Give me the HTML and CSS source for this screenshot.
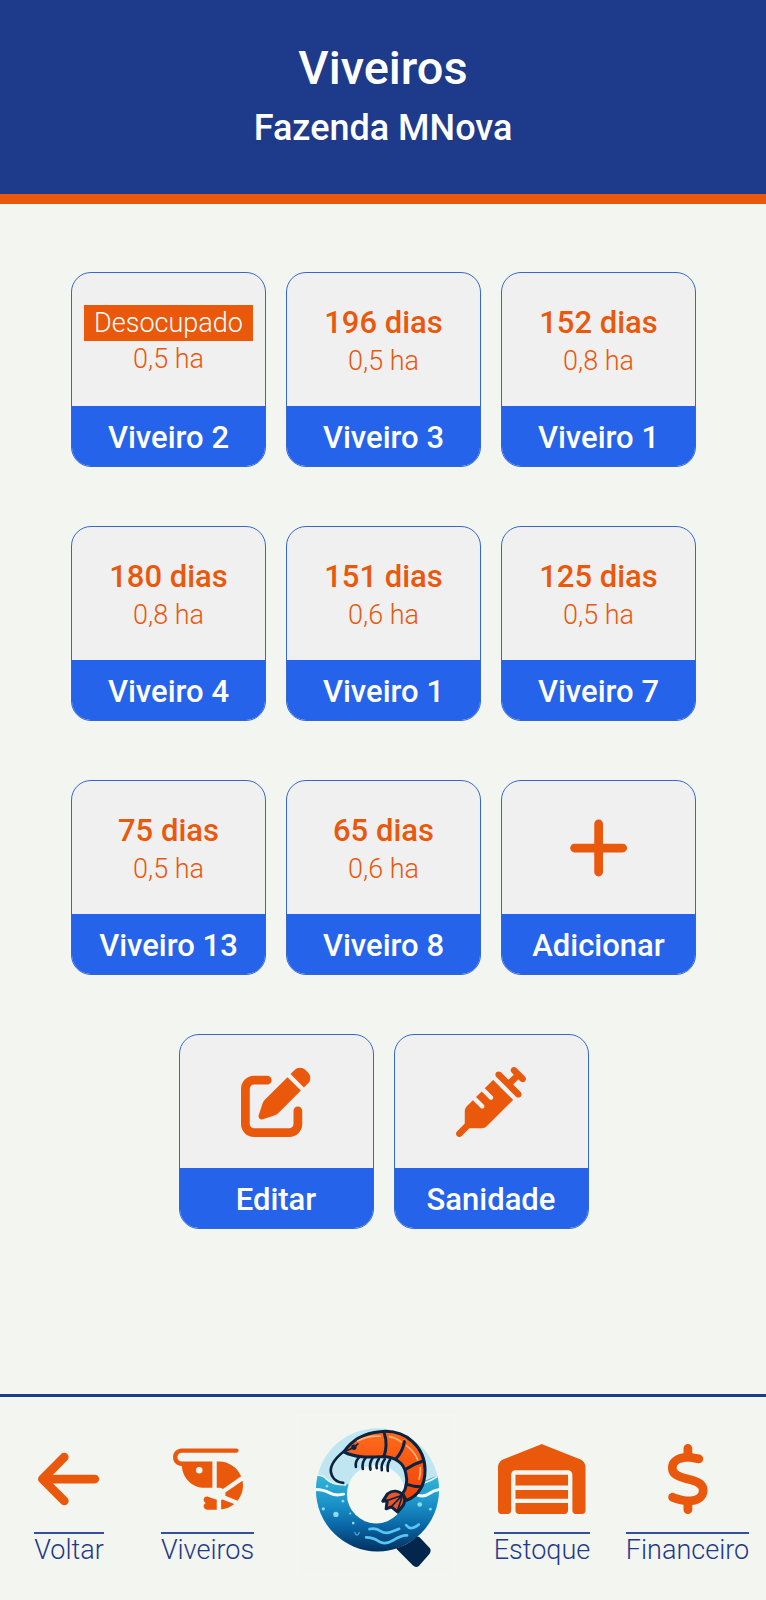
FILE: index.html
```html
<!DOCTYPE html>
<html lang="pt-BR">
<head>
<meta charset="utf-8">
<meta name="viewport" content="width=device-width, initial-scale=1">
<title>Viveiros</title>
<link rel="stylesheet" href="styles.css">
</head>
<body>
<header class="header">
  <h1 class="header-title">Viveiros</h1>
  <h2 class="header-farm">Fazenda MNova</h2>
</header>

<main class="ponds">
  <a class="card" href="#"><span class="card-body"><span class="badge">Desocupado</span><span class="area">0,5 ha</span></span><span class="card-label">Viveiro 2</span></a>
  <a class="card" href="#"><span class="card-body"><span class="days">196 dias</span><span class="area">0,5 ha</span></span><span class="card-label">Viveiro 3</span></a>
  <a class="card" href="#"><span class="card-body"><span class="days">152 dias</span><span class="area">0,8 ha</span></span><span class="card-label">Viveiro 1</span></a>
  <a class="card" href="#"><span class="card-body"><span class="days">180 dias</span><span class="area">0,8 ha</span></span><span class="card-label">Viveiro 4</span></a>
  <a class="card" href="#"><span class="card-body"><span class="days">151 dias</span><span class="area">0,6 ha</span></span><span class="card-label">Viveiro 1</span></a>
  <a class="card" href="#"><span class="card-body"><span class="days">125 dias</span><span class="area">0,5 ha</span></span><span class="card-label">Viveiro 7</span></a>
  <a class="card" href="#"><span class="card-body"><span class="days">75 dias</span><span class="area">0,5 ha</span></span><span class="card-label">Viveiro 13</span></a>
  <a class="card" href="#"><span class="card-body"><span class="days">65 dias</span><span class="area">0,6 ha</span></span><span class="card-label">Viveiro 8</span></a>
  <button class="card" type="button"><span class="card-body"><svg class="icon" viewBox="0 0 448 512" aria-hidden="true"><path d="M256 80c0-17.7-14.3-32-32-32s-32 14.3-32 32V224H48c-17.7 0-32 14.3-32 32s14.3 32 32 32H192V432c0 17.7 14.3 32 32 32s32-14.3 32-32V288H400c17.7 0 32-14.3 32-32s-14.3-32-32-32H256V80z"/></svg></span><span class="card-label">Adicionar</span></button>
  <button class="card" type="button"><span class="card-body"><svg class="icon" viewBox="0 0 512 512" aria-hidden="true"><path d="M471.6 21.7c-21.9-21.9-57.3-21.9-79.2 0L362.3 51.7l97.9 97.9 30.1-30.1c21.9-21.9 21.9-57.3 0-79.2L471.6 21.7zm-299.2 220c-6.1 6.1-10.8 13.6-13.5 21.9l-29.6 88.8c-2.9 8.6-.6 18.1 5.8 24.6s15.9 8.7 24.6 5.8l88.8-29.6c8.2-2.7 15.7-7.4 21.9-13.5L437.7 172.3 339.7 74.3 172.4 241.7zM96 64C43 64 0 107 0 160V416c0 53 43 96 96 96H352c53 0 96-43 96-96V320c0-17.7-14.3-32-32-32s-32 14.3-32 32v96c0 17.7-14.3 32-32 32H96c-17.7 0-32-14.3-32-32V160c0-17.7 14.3-32 32-32h96c17.7 0 32-14.3 32-32s-14.3-32-32-32H96z"/></svg></span><span class="card-label">Editar</span></button>
  <button class="card" type="button"><span class="card-body"><svg class="icon" viewBox="0 0 512 512" aria-hidden="true"><path d="M441 7l32 32 32 32c9.4 9.4 9.4 24.6 0 33.9s-24.6 9.4-33.9 0l-15-15L417.9 128l55 55c9.4 9.4 9.4 24.6 0 33.9s-24.6 9.4-33.9 0l-72-72L295 73c-9.4-9.4-9.4-24.6 0-33.9s24.6-9.4 33.9 0l55 55L422.1 56 407 41c-9.4-9.4-9.4-24.6 0-33.9s24.6-9.4 33.9 0zM210.3 155.7l61.1-61.1c.3 .3 .6 .7 1 1l16 16 56 56 56 56 16 16c.3 .3 .6 .6 1 1l-191 191c-10.5 10.5-24.7 16.4-39.6 16.4H97.9L41 505c-9.4 9.4-24.6 9.4-33.9 0s-9.4-24.6 0-33.9l57-57V325.3c0-14.9 5.9-29.1 16.4-39.6l43.3-43.3 57 57c6.2 6.2 16.4 6.2 22.6 0s6.2-16.4 0-22.6l-57-57 41.4-41.4 57 57c6.2 6.2 16.4 6.2 22.6 0s6.2-16.4 0-22.6l-57-57z"/></svg></span><span class="card-label">Sanidade</span></button>
</main>

<nav class="tabs" aria-label="Principal">
  <a class="tab" href="#"><svg class="icon" viewBox="0 0 448 512" aria-hidden="true"><path d="M9.4 233.4c-12.5 12.5-12.5 32.8 0 45.3l160 160c12.5 12.5 32.8 12.5 45.3 0s12.5-32.8 0-45.3L109.2 288 416 288c17.7 0 32-14.3 32-32s-14.3-32-32-32l-306.7 0L214.6 118.6c12.5-12.5 12.5-32.8 0-45.3s-32.8-12.5-45.3 0l-160 160z"/></svg><span class="tab-label">Voltar</span></a>
  <a class="tab" href="#"><svg class="icon" viewBox="0 0 512 512" aria-hidden="true"><path d="M64 32C28.7 32 0 60.7 0 96s28.7 64 64 64h1c3.7 88.9 77 160 167 160h56V128H264 88.8 64c-17.7 0-32-14.3-32-32s14.3-32 32-32H464c8.8 0 16-7.2 16-16s-7.2-16-16-16H64zM224 456c0 13.3 10.7 24 24 24h72V407.8l-64.1-22.4c-12.5-4.4-26.2 2.2-30.6 14.7s2.2 26.2 14.7 30.6l4.5 1.6C233 433.9 224 443.9 224 456zm128 23.3c36.4-3.3 69.5-17.6 96.1-39.6l-86.5-34.6c-3 1.8-6.2 3.2-9.6 4.3v69.9zM472.6 415c24.6-30.3 39.4-68.9 39.4-111c0-12.3-1.3-24.3-3.7-35.9L382.8 355.1c.8 3.4 1.2 7 1.2 10.6c0 4.6-.7 9-1.9 13.1L472.6 415zM336 128H320V320h18.3c9.9 0 19.1 3.2 26.6 8.5l133.5-92.4C471.8 172.6 409.1 128 336 128zM168 192a24 24 0 1 1 48 0 24 24 0 1 1 -48 0z"/></svg><span class="tab-label">Viveiros</span></a>
  <a class="tab-home" href="#" aria-label="Início">
    <svg class="logo" viewBox="20 15 475 475" aria-hidden="true">
      <defs>
        <linearGradient id="sea" x1="0" y1="195" x2="0" y2="422" gradientUnits="userSpaceOnUse">
          <stop offset="0" stop-color="#35b4d8"/><stop offset=".35" stop-color="#1c94c9"/><stop offset=".65" stop-color="#0b68a8"/><stop offset="1" stop-color="#02315f"/>
        </linearGradient>
        <linearGradient id="shell" x1="0" y1="65" x2="0" y2="260" gradientUnits="userSpaceOnUse">
          <stop offset="0" stop-color="#ff6a1c"/><stop offset="1" stop-color="#f04208"/>
        </linearGradient>
        <clipPath id="disc"><circle cx="262" cy="237" r="185"/></clipPath>
      </defs>
      <g clip-path="url(#disc)">
        <path d="M70 40H460V430H70z" fill="#bfe6f1"/>
        <path d="M70 196Q95 190 112 208T170 220L345 224Q385 222 405 210T450 192V430H70z" fill="url(#sea)"/>
        <path d="M76 236Q100 236 118 246T160 250M385 254Q405 258 418 248T448 236" fill="none" stroke="#f3fbfc" stroke-width="9" stroke-linecap="round"/>
        <path d="M76 194Q96 190 110 206T168 222M392 220Q424 210 448 194" fill="none" stroke="#e2f6fa" stroke-width="5"/>
      </g>
      <circle cx="258" cy="250" r="88" fill="#f5f7f2"/>
      <path d="M318 413Q352 403 380 378Q386 376 392 383L419 412Q425 420 418 430L387 465Q378 473 368 464Z" fill="#03264c"/>
      <path d="M238 355Q254 350 270 360T302 364T327 354M228 380Q248 380 266 392T310 388T351 374M348 343Q358 355 369 351T386 341" fill="none" stroke="#58c5f2" stroke-width="8" stroke-linecap="round"/>
      <g fill="#8bdcf2"><circle cx="137" cy="311" r="8"/><circle cx="99" cy="294" r="5"/><circle cx="158" cy="271" r="4"/><circle cx="180" cy="308" r="3"/><circle cx="189" cy="337" r="4"/><circle cx="110" cy="226" r="4"/><circle cx="389" cy="281" r="7"/><circle cx="421" cy="295" r="4"/></g>
      <path d="M193 364Q200 382 208 364" fill="none" stroke="#4ba5d6" stroke-width="4"/>
      <g fill="none" stroke="#0b2340" stroke-width="8" stroke-linecap="round">
        <path d="M165 118C130 145 113 169 125 194Q134 214 159 216"/>
        <path d="M208 138Q194 150 197 168M227 140Q214 154 218 174M247 142Q236 157 241 176M266 144Q256 158 260 172M284 145Q272 159 275 178M300 146Q290 161 293 180"/>
      </g>
      <path d="M161 123C185 86 222 66 270 62C350 54 405 111 405 178C405 217 390 252 349 269L337 249C350 232 352 208 347 187C342 157 316 139 280 137C238 139 196 142 161 123Z" fill="url(#shell)" stroke="#0b2340" stroke-width="9" stroke-linejoin="round"/>
      <path d="M202 90Q234 73 271 76M298 77Q320 82 333 93M350 105Q374 124 383 147M391 170Q392 188 387 205" fill="none" stroke="#ffb477" stroke-width="5" stroke-linecap="round"/>
      <path d="M282 65Q294 101 281 138M343 92Q338 122 318 143M397 151Q370 159 346 176M394 228Q370 228 348 220" fill="none" stroke="#0b2340" stroke-width="9" stroke-linecap="round"/>
      <path d="M168 119Q188 114 203 99" fill="none" stroke="#0b2340" stroke-width="5" stroke-linecap="round"/>
      <circle cx="191" cy="109" r="8" fill="#0b2340"/>
      <path d="M341 255C326 238 307 238 292 249L278 271L291 270L288 294L304 288L323 304L339 284Q347 270 341 255Z" fill="#ec5527" stroke="#0b2340" stroke-width="9" stroke-linejoin="round"/>
      <path d="M334 254L292 269M334 256L304 287M336 258L322 300" fill="none" stroke="#0b2340" stroke-width="5" stroke-linecap="round"/>
    </svg>
  </a>
  <a class="tab" href="#"><svg class="icon" viewBox="0 0 640 512" aria-hidden="true"><path d="M0 488V171.3c0-26.2 15.9-49.7 40.2-59.4L308.1 4.8c7.6-3.1 16.1-3.1 23.8 0L599.8 111.9c24.3 9.7 40.2 33.3 40.2 59.4V488c0 13.3-10.7 24-24 24H568c-13.3 0-24-10.7-24-24V224c0-17.7-14.3-32-32-32H128c-17.7 0-32 14.3-32 32V488c0 13.3-10.7 24-24 24H24c-13.3 0-24-10.7-24-24zm488 24l-336 0c-13.3 0-24-10.7-24-24V432H512l0 56c0 13.3-10.7 24-24 24zM128 400V336H512v64H128zm0-96V224H512l0 80H128z"/></svg><span class="tab-label">Estoque</span></a>
  <a class="tab" href="#"><svg class="icon" viewBox="0 0 320 512" aria-hidden="true"><path d="M160 0c17.7 0 32 14.3 32 32V67.7c1.6 .2 3.1 .4 4.7 .7c.4 .1 .7 .1 1.1 .2l48 8.8c17.4 3.2 28.9 19.9 25.7 37.2s-19.9 28.9-37.2 25.7l-47.5-8.7c-31.3-4.6-58.9-1.5-78.3 6.2s-27.2 18.3-29 28.1c-2 10.7-.5 16.7 1.2 20.4c1.8 3.9 5.5 8.3 12.8 13.2c16.3 10.7 41.3 17.7 73.7 26.3l2.9 .8c28.6 7.6 63.6 16.8 89.6 33.8c14.2 9.3 27.6 21.9 35.9 39.5c8.5 17.9 10.3 37.9 6.4 59.2c-6.9 38-33.1 63.4-65.6 76.7c-13.7 5.6-28.6 9.2-44.4 11V480c0 17.7-14.3 32-32 32s-32-14.3-32-32V445.1c-.4-.1-.9-.1-1.3-.2l-.2 0 0 0c-24.4-3.8-64.5-14.3-91.5-26.3c-16.1-7.2-23.4-26.1-16.2-42.2s26.1-23.4 42.2-16.2c20.9 9.3 55.3 18.5 75.2 21.6c31.9 4.7 58.2 2 76-5.3c16.9-6.9 24.6-16.9 26.8-28.9c1.9-10.6 .4-16.7-1.3-20.4c-1.9-4-5.6-8.4-13-13.3c-16.4-10.7-41.5-17.7-74-26.3l-2.8-.7 0 0C119.4 279.3 84.4 270 58.4 253c-14.2-9.3-27.5-22-35.8-39.6c-8.4-17.9-10.1-37.9-6.1-59.2C23.7 116 52.3 91.2 84.8 78.3c13.3-5.3 27.9-8.9 43.2-11V32c0-17.7 14.3-32 32-32z"/></svg><span class="tab-label">Financeiro</span></a>
</nav>
</body>
</html>
```

FILE: styles.css
```css
:root {
  --navy: #1e3a8a;
  --blue: #2563eb;
  --orange: #ea580c;
  --page: #f3f5f0;
}

* {
  box-sizing: border-box;
}

body {
  display: flex;
  flex-direction: column;
  min-height: 100vh;
  margin: 0;
  background: var(--page);
  font-family: Roboto, "Liberation Sans", sans-serif;
}

.header {
  display: flex;
  flex-direction: column;
  gap: 8px;
  padding: 40px 16px 42px;
  border-bottom: 10px solid var(--orange);
  background: var(--navy);
  color: #fff;
  text-align: center;
}

.header-title,
.header-farm {
  margin: 0;
  font-weight: 500;
}

.header-title {
  font-size: 47px;
  line-height: 56px;
}

.header-farm {
  font-size: 36px;
  line-height: 48px;
}

.ponds {
  display: flex;
  flex: 1;
  flex-wrap: wrap;
  align-content: flex-start;
  justify-content: center;
  gap: 59px 20px;
  padding: 68px 70px 68px 71px;
}

.card {
  display: flex;
  flex-direction: column;
  width: calc((100% - 40px) / 3);
  aspect-ratio: 1;
  padding: 0;
  overflow: hidden;
  border: 1px solid #3568cc;
  border-radius: 20px;
  background: #f0f0f0;
  color: var(--orange);
  font-family: inherit;
  text-align: center;
  text-decoration: none;
}

.card-body {
  display: flex;
  flex: 1;
  flex-direction: column;
  align-items: center;
  justify-content: center;
  gap: 2px;
}

.days {
  font-size: 31px;
  font-weight: 500;
  line-height: 40px;
}

.area {
  font-size: 27px;
  font-weight: 300;
  line-height: 32px;
}

.badge {
  padding: 0 10px;
  background: var(--orange);
  color: #fff;
  font-size: 27px;
  font-weight: 300;
  line-height: 36px;
}

.card-label {
  padding: 12px 0 8px;
  background: var(--blue);
  color: #fff;
  font-size: 31px;
  font-weight: 500;
  line-height: 40px;
}

.icon {
  display: block;
  height: 70px;
  fill: var(--orange);
}

.tabs {
  display: grid;
  grid-template-columns: 138fr 139fr 198fr 134fr 157fr;
  align-items: center;
  padding: 18px 0 25px;
  border-top: 3px solid var(--navy);
}

.tab {
  display: flex;
  flex-direction: column;
  align-items: center;
  gap: 18px;
  padding-top: 20px;
  color: var(--navy);
  text-decoration: none;
}

.tab-label {
  border-top: 2px solid #35509a;
  font-size: 27px;
  font-weight: 300;
  line-height: 32px;
}

.tab-home {
  justify-self: center;
  border: 1px solid #f5f7f3;
}

.logo {
  display: block;
  width: 158px;
  height: 158px;
}
```
